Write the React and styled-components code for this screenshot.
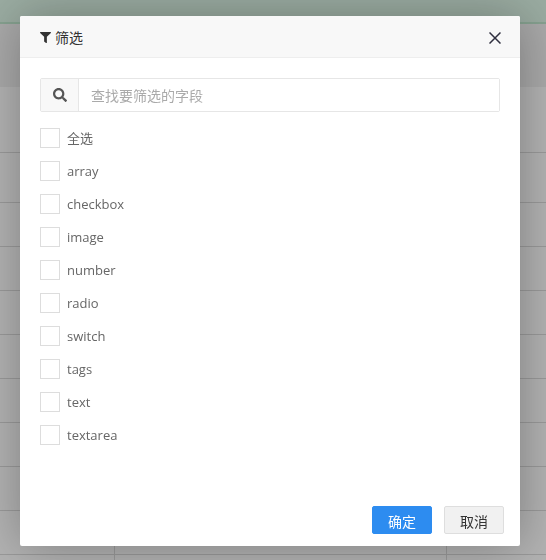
import React from 'react';
import styled, { createGlobalStyle } from 'styled-components';
import { FaFilter, FaSearch } from 'react-icons/fa';

const GlobalStyle = createGlobalStyle`
  html, body {
    margin: 0;
    padding: 0;
    height: 100%;
    overflow: hidden;
    background: #fff;
    font-family: "Open Sans", "Noto Sans CJK SC", sans-serif;
  }
  * {
    box-sizing: border-box;
  }
`;

const Table = styled.div`
  display: flex;
  flex-direction: column;
  height: 560px;
  overflow: hidden;
`;

const TableHead = styled.div`
  height: 24px;
  flex: none;
  background: #dcf5e6;
  border-bottom: 2px solid #bfe6cd;
`;

const TableRow = styled.div`
  display: grid;
  grid-template-columns: 115px 332px 1fr;
  flex: none;
  height: ${props => props.$height}px;
  background: ${props => props.$shaded ? '#f2f2f2' : '#fff'};
  border-bottom: ${props => props.$noLine ? 'none' : '1px solid #dcdcdc'};
`;

const TableCell = styled.div`
  border-right: ${props => props.$tall ? '1px solid #dcdcdc' : 'none'};
`;

const Overlay = styled.div`
  position: fixed;
  inset: 0;
  display: flex;
  align-items: flex-start;
  padding: 16px 0 0 20px;
  background: rgba(0, 0, 0, 0.3);
`;

const Dialog = styled.div`
  display: flex;
  flex-direction: column;
  width: 500px;
  height: 530px;
  background: #fff;
  border-radius: 2px;
  box-shadow: 1px 1px 50px rgba(0, 0, 0, 0.3);
`;

const DialogHeader = styled.div`
  display: flex;
  align-items: center;
  justify-content: space-between;
  height: 42px;
  flex: none;
  padding: 2px 19px 0 20px;
  background: #f8f8f8;
  border-bottom: 1px solid #eee;
  border-radius: 2px 2px 0 0;
`;

const DialogTitle = styled.div`
  display: flex;
  align-items: center;
  gap: 4px;
  font-size: 14px;
  line-height: 20px;
  color: #333;
`;

const FilterIcon = styled(FaFilter)`
  display: block;
  font-size: 11px;
  color: #333;
`;

const CloseIcon = styled.svg`
  display: block;
  width: 12px;
  height: 12px;
`;

const DialogBody = styled.div`
  flex: 1;
  padding: 20px;
`;

const SearchGroup = styled.div`
  display: flex;
  height: 34px;
  border: 1px solid #e6e6e6;
  border-radius: 2px;
  margin-bottom: 16px;
`;

const SearchAddon = styled.div`
  display: flex;
  align-items: center;
  justify-content: center;
  width: 38px;
  flex: none;
  background: #f8f8f8;
  border-right: 1px solid #e6e6e6;
  color: #555;
  font-size: 14px;
`;

const SearchInput = styled.input`
  flex: 1;
  min-width: 0;
  border: none;
  outline: none;
  padding: 0 12px;
  background: #fff;
  font-family: inherit;
  font-size: 14px;
  color: #333;

  &::placeholder {
    color: #aaa;
    opacity: 1;
  }
`;

const FieldList = styled.div`
  display: flex;
  flex-direction: column;
  gap: 13px;
`;

const FieldRow = styled.label`
  display: flex;
  align-items: center;
  gap: 7px;
  height: 20px;
  font-size: 13px;
  line-height: 20px;
  color: #666;
`;

const CheckBox = styled.span`
  width: 20px;
  height: 20px;
  flex: none;
  background: #fff;
  border: 1px solid #ddd;
`;

const DialogFooter = styled.div`
  display: flex;
  justify-content: flex-end;
  gap: 12px;
  flex: none;
  padding: 0 16px 12px;
`;

const FooterButton = styled.button`
  width: 60px;
  height: 28px;
  padding: 4px 0 0;
  border: 1px solid ${props => props.$primary ? '#2d8cf0' : '#dedede'};
  border-radius: 2px;
  background: ${props => props.$primary ? '#2d8cf0' : '#f1f1f1'};
  color: ${props => props.$primary ? '#fff' : '#333'};
  font-family: inherit;
  font-size: 14px;
  line-height: 22px;
  cursor: pointer;
`;

const rows = [
  { height: 63, shaded: true, noLine: true },
  { height: 66 },
  { height: 50 },
  { height: 44 },
  { height: 44 },
  { height: 44 },
  { height: 44 },
  { height: 44 },
  { height: 44 },
  { height: 44 },
  { height: 44 },
];

const fields = ['全选', 'array', 'checkbox', 'image', 'number', 'radio', 'switch', 'tags', 'text', 'textarea'];

const App = () => {
  return (
    <>
      <GlobalStyle />
      <Table>
        <TableHead />
        {rows.map((row, i) => (
          <TableRow key={i} $height={row.height} $shaded={row.shaded} $noLine={row.noLine}>
            <TableCell $tall={i === rows.length - 1} />
            <TableCell $tall={i === rows.length - 1} />
            <TableCell />
          </TableRow>
        ))}
        <TableRow $height={20}>
          <TableCell $tall />
          <TableCell $tall />
          <TableCell />
        </TableRow>
      </Table>
      <Overlay>
        <Dialog>
          <DialogHeader>
            <DialogTitle>
              <FilterIcon />
              筛选
            </DialogTitle>
            <CloseIcon viewBox="0 0 12 12">
              <path d="M0.5 0.5 L11.5 11.5 M11.5 0.5 L0.5 11.5" stroke="#2f2f3f" strokeWidth="1.5" fill="none" />
            </CloseIcon>
          </DialogHeader>
          <DialogBody>
            <SearchGroup>
              <SearchAddon>
                <FaSearch />
              </SearchAddon>
              <SearchInput placeholder="查找要筛选的字段" />
            </SearchGroup>
            <FieldList>
              {fields.map(name => (
                <FieldRow key={name}>
                  <CheckBox />
                  {name}
                </FieldRow>
              ))}
            </FieldList>
          </DialogBody>
          <DialogFooter>
            <FooterButton $primary>确定</FooterButton>
            <FooterButton>取消</FooterButton>
          </DialogFooter>
        </Dialog>
      </Overlay>
    </>
  );
};

export default App;
